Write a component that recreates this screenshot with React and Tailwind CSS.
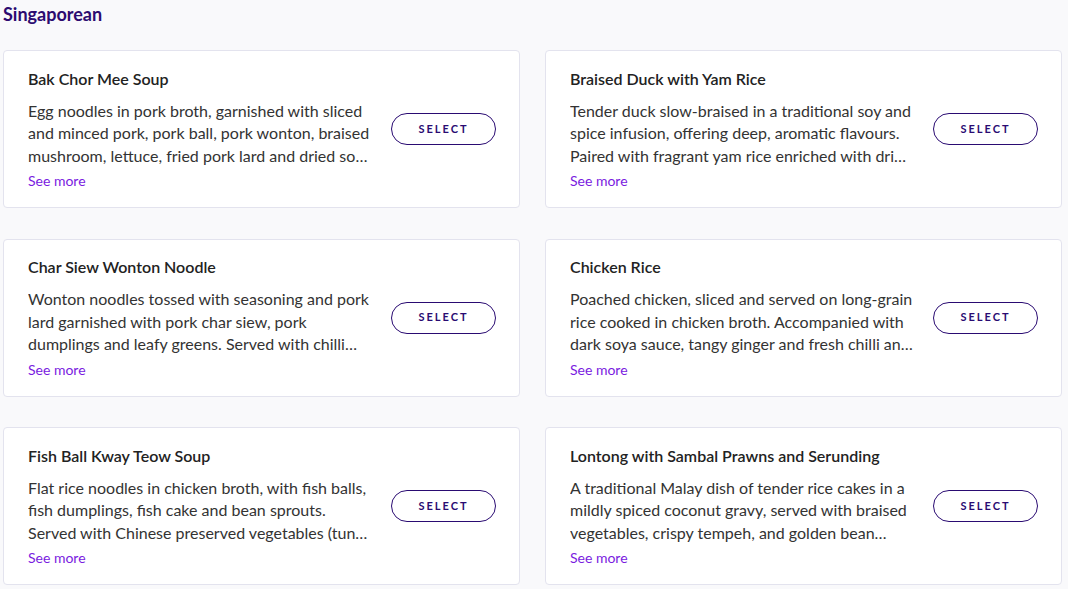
import React from "react";

const items = [
  {
    title: "Bak Chor Mee Soup",
    desc: "Egg noodles in pork broth, garnished with sliced and minced pork, pork ball, pork wonton, braised mushroom, lettuce, fried pork lard and dried sole fish.",
  },
  {
    title: "Braised Duck with Yam Rice",
    desc: "Tender duck slow-braised in a traditional soy and spice infusion, offering deep, aromatic flavours. Paired with fragrant yam rice enriched with dried shrimp.",
  },
  {
    title: "Char Siew Wonton Noodle",
    desc: "Wonton noodles tossed with seasoning and pork lard garnished with pork char siew, pork dumplings and leafy greens. Served with chilli sauce.",
  },
  {
    title: "Chicken Rice",
    desc: "Poached chicken, sliced and served on long-grain rice cooked in chicken broth. Accompanied with dark soya sauce, tangy ginger and fresh chilli and garlic sauce.",
  },
  {
    title: "Fish Ball Kway Teow Soup",
    desc: "Flat rice noodles in chicken broth, with fish balls, fish dumplings, fish cake and bean sprouts. Served with Chinese preserved vegetables (tung chai).",
  },
  {
    title: "Lontong with Sambal Prawns and Serunding",
    desc: "A traditional Malay dish of tender rice cakes in a mildly spiced coconut gravy, served with braised vegetables, crispy tempeh, and golden bean curd.",
  },
];

function Card({ title, desc }) {
  return (
    <div className="flex items-center bg-white border border-[#e3e3ee] rounded-[4px] h-[158px] pl-6 pr-[23px]">
      <div className="w-[343px] flex-none pt-[1px]">
        <div className="text-[16px] leading-[20px] font-semibold text-[#222] whitespace-nowrap">{title}</div>
        <p className="mt-[11px] text-[16px] leading-[22.5px] text-[#333] line-clamp-3">{desc}</p>
        <div className="mt-[5px] text-[14px] leading-[18px] text-[#7a1be0]">See more</div>
      </div>
      <button className="ml-[20px] shrink-0 w-[105px] h-[32px] rounded-full border border-[#2a0b72] text-[#2a0b72] text-[11px] font-bold tracking-[2px] flex items-center justify-center bg-white">
        SELECT
      </button>
    </div>
  );
}

export default function App() {
  return (
    <div
      className="min-h-screen bg-[#f9f9fb] pl-[3px] pr-[5px]"
      style={{ fontFamily: "Lato, 'Open Sans', sans-serif" }}
    >
      <h2 className="pt-[2px] h-[24px] leading-[24px] text-[18px] font-bold text-[#2c0b70]">Singaporean</h2>
      <div className="mt-[26px] grid grid-cols-2 gap-x-[25px] gap-y-[30.5px] w-[1059px]">
        {items.map((it) => (
          <Card key={it.title} {...it} />
        ))}
      </div>
    </div>
  );
}
